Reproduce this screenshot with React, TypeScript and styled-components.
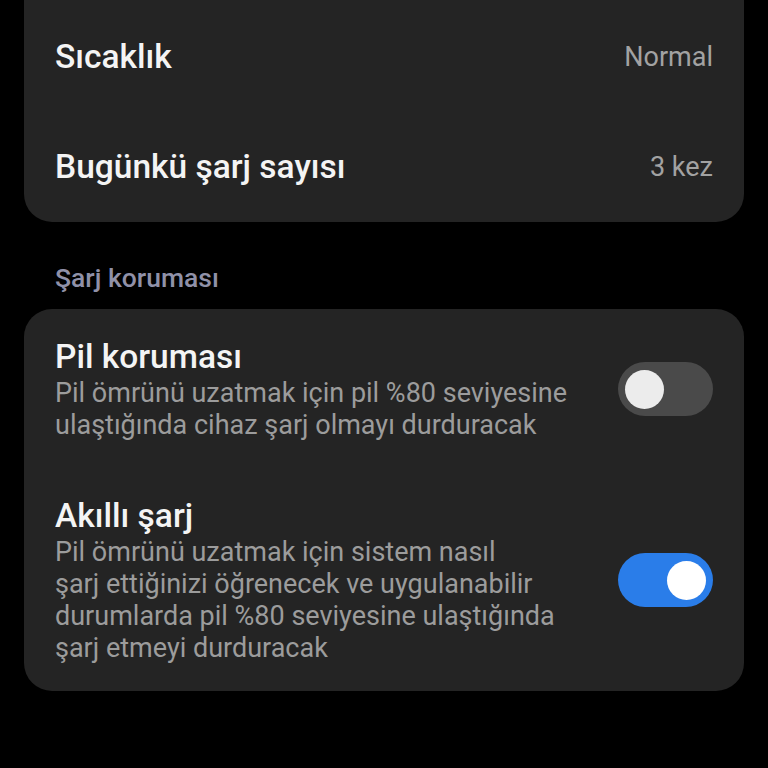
import React from "react";
import styled, { createGlobalStyle } from "styled-components";

type InfoRow = {
    label: string;
    value: string;
};

type SwitchRow = {
    title: string;
    description: string;
    on: boolean;
};

const infoRows: Array<InfoRow> = [
    { label: "Sıcaklık", value: "Normal" },
    { label: "Bugünkü şarj sayısı", value: "3 kez" },
];

// line breaks follow the device's wrapping
const switchRows: Array<SwitchRow> = [
    {
        title: "Pil koruması",
        description:
            "Pil ömrünü uzatmak için pil %80 seviyesine\nulaştığında cihaz şarj olmayı durduracak",
        on: false,
    },
    {
        title: "Akıllı şarj",
        description:
            "Pil ömrünü uzatmak için sistem nasıl\nşarj ettiğinizi öğrenecek ve uygulanabilir\ndurumlarda pil %80 seviyesine ulaştığında\nşarj etmeyi durduracak",
        on: true,
    },
];

const App = () => {
    return (
        <>
            <GlobalStyle />
            <Screen>
                <TopCard>
                    {infoRows.map((row) => (
                        <InfoItem key={row.label}>
                            <Label>{row.label}</Label>
                            <Value>{row.value}</Value>
                        </InfoItem>
                    ))}
                </TopCard>

                <SectionHeader>Şarj koruması</SectionHeader>

                <Card>
                    {switchRows.map((row) => (
                        <SwitchItem key={row.title}>
                            <SwitchText>
                                <Label>{row.title}</Label>
                                <Description>{row.description}</Description>
                            </SwitchText>
                            <Track on={row.on}>
                                <Thumb on={row.on} />
                            </Track>
                        </SwitchItem>
                    ))}
                </Card>
            </Screen>
        </>
    );
};

export default App;

const GlobalStyle = createGlobalStyle`
    html, body {
        margin: 0;
        padding: 0;
        background: #000;
    }
    body {
        font-family: Roboto, "Noto Sans", sans-serif;
        -webkit-font-smoothing: antialiased;
    }
`;

const Screen = styled.div`
    width: 768px;
    height: 768px;
    overflow: hidden;
    background: #000;
    padding: 0 24px;
    box-sizing: border-box;
`;

const Card = styled.div`
    background: #242424;
    border-radius: 28px;
    padding: 0 31px;
`;

const TopCard = styled(Card)`
    border-radius: 0 0 28px 28px;
    padding-top: 2px;
`;

const InfoItem = styled.div`
    display: flex;
    align-items: center;
    justify-content: space-between;
    height: 110px;
`;

const Label = styled.div`
    color: #f4f4f4;
    font-size: 33.5px;
    font-weight: 500;
    line-height: 40px;
`;

const Value = styled.div`
    color: #a2a2a2;
    font-size: 27px;
    line-height: 34px;
`;

const SectionHeader = styled.div`
    color: #9091a8;
    font-size: 26.5px;
    font-weight: 500;
    line-height: 30px;
    padding: 41px 31px 16px;
`;

const SwitchItem = styled.div`
    display: flex;
    align-items: center;
    justify-content: space-between;
    gap: 20px;
    padding: 28px 0 27px;
`;

const SwitchText = styled.div`
    display: flex;
    flex-direction: column;
`;

const Description = styled.div`
    color: #9c9c9c;
    font-size: 27px;
    line-height: 32px;
    white-space: pre-line;
`;

const Track = styled.div<{ on: boolean }>`
    flex-shrink: 0;
    width: 95px;
    height: 54px;
    border-radius: 27px;
    background: ${(props) => (props.on ? "#2a7de9" : "#4a4a4a")};
    display: flex;
    align-items: center;
    justify-content: ${(props) => (props.on ? "flex-end" : "flex-start")};
    padding: 0 7px;
    box-sizing: border-box;
`;

const Thumb = styled.div<{ on: boolean }>`
    width: 39px;
    height: 39px;
    border-radius: 50%;
    background: ${(props) => (props.on ? "#ffffff" : "#ececec")};
`;
